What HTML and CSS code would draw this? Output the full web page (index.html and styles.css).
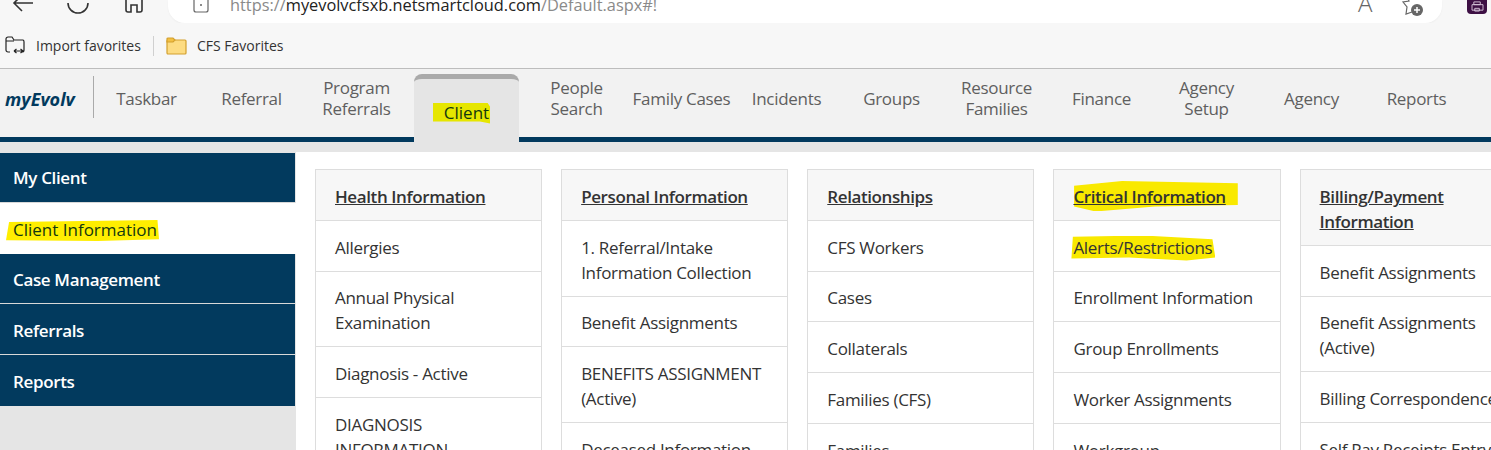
FILE: index.html
```html
<!DOCTYPE html>
<html lang="en">
<head>
<meta charset="utf-8">
<title>myEvolv</title>
<link rel="stylesheet" href="styles.css">
</head>
<body>
<header class="browser">
  <div class="toolbar">
    <svg class="tb-icon back" viewBox="0 0 24 14"><path d="M22 3H3M11-5 3 3l8 8"/></svg>
    <svg class="tb-icon refresh" viewBox="0 0 24 16"><path d="M22 3A10 10 0 1 1 2 3"/></svg>
    <svg class="tb-icon home" viewBox="0 0 20 14"><path d="M2-4V10a2 2 0 0 0 2 2h3V5h6v7h3a2 2 0 0 0 2-2V-4"/></svg>
    <div class="address">
      <svg class="site-icon" viewBox="0 0 16 14"><path d="M1-3V10a2 2 0 0 0 2 2h10a2 2 0 0 0 2-2V-3"/><circle cx="8" cy="5" r="1"/></svg>
      <div class="url"><span class="url-dim">https://</span>myevolvcfsxb.netsmartcloud.com<span class="url-dim">/Default.aspx#!</span></div>
      <div class="addr-right">
        <span class="read-a">A<span class="read-w">&#x2019;&#x2019;</span></span>
        <svg class="fav-add" viewBox="0 0 24 18"><path class="star" d="M6-4 8 1l-6 1 4 5-1 7 6-2"/><path class="star" d="M13-4l2 3 6 .5"/><circle cx="16" cy="10" r="6"/><path class="plus" d="M16 7v6M13 10h6"/></svg>
      </div>
    </div>
    <div class="profile"><svg viewBox="0 0 14 12"><path d="M3 1h7v3H3zM1 4h12v6H1zM4 8h5v3H4z"/></svg></div>
  </div>
  <div class="favbar">
    <div class="fav">
      <svg class="fav-import" viewBox="0 0 21 19"><path d="M5 16H3a2 2 0 0 1-2-2V3a2 2 0 0 1 2-2h4l2 3h9a2 2 0 0 1 1 2v8a2 2 0 0 1-2 2M1 5h8M9 15h9M9 15l2.500-2M9 15l2.500 2M18 15l-2.500-2M18 15l-2.500 2"/></svg>
      <span>Import favorites</span>
    </div>
    <div class="fav-sep"></div>
    <div class="fav">
      <svg class="folder" viewBox="0 0 21 18"><path class="folder-body" d="M1 4a1 1 0 0 1 1-1h17a1 1 0 0 1 1 1v12a1 1 0 0 1-1 1H2a1 1 0 0 1-1-1z"/><path class="folder-tab" d="M1 5V2a1 1 0 0 1 1-1h5l2 2-2 2z"/></svg>
      <span>CFS Favorites</span>
    </div>
  </div>
</header>

<nav class="mainnav">
  <div class="logo">myEvolv</div>
  <a class="nav-item">Taskbar</a>
  <a class="nav-item">Referral</a>
  <a class="nav-item">Program Referrals</a>
  <a class="nav-item active"><span class="hl hl-client">Client</span></a>
  <a class="nav-item">People Search</a>
  <a class="nav-item">Family Cases</a>
  <a class="nav-item">Incidents</a>
  <a class="nav-item">Groups</a>
  <a class="nav-item">Resource Families</a>
  <a class="nav-item">Finance</a>
  <a class="nav-item">Agency Setup</a>
  <a class="nav-item">Agency</a>
  <a class="nav-item">Reports</a>
</nav>

<div class="workspace">
  <aside class="sidebar">
    <a class="side-item">My Client</a>
    <a class="side-item current"><span class="hl hl-side">Client Information</span></a>
    <a class="side-item">Case Management</a>
    <a class="side-item">Referrals</a>
    <a class="side-item">Reports</a>
  </aside>
  <main class="content">
    <section class="panel">
      <h2 class="panel-head"><a>Health Information</a></h2>
      <a class="row">Allergies</a>
      <a class="row">Annual Physical Examination</a>
      <a class="row">Diagnosis - Active</a>
      <a class="row">DIAGNOSIS INFORMATION</a>
    </section>
    <section class="panel">
      <h2 class="panel-head"><a>Personal Information</a></h2>
      <a class="row">1. Referral/Intake Information Collection</a>
      <a class="row">Benefit Assignments</a>
      <a class="row">BENEFITS ASSIGNMENT (Active)</a>
      <a class="row">Deceased Information</a>
    </section>
    <section class="panel">
      <h2 class="panel-head"><a>Relationships</a></h2>
      <a class="row">CFS Workers</a>
      <a class="row">Cases</a>
      <a class="row">Collaterals</a>
      <a class="row">Families (CFS)</a>
      <a class="row">Families</a>
    </section>
    <section class="panel">
      <h2 class="panel-head"><a class="hl hl-crit">Critical Information</a></h2>
      <a class="row"><span class="hl hl-alert">Alerts/Restrictions</span></a>
      <a class="row">Enrollment Information</a>
      <a class="row">Group Enrollments</a>
      <a class="row">Worker Assignments</a>
      <a class="row">Workgroup</a>
    </section>
    <section class="panel">
      <h2 class="panel-head"><a>Billing/Payment Information</a></h2>
      <a class="row">Benefit Assignments</a>
      <a class="row">Benefit Assignments (Active)</a>
      <a class="row">Billing Correspondence</a>
      <a class="row">Self Pay Receipts Entry</a>
    </section>
  </main>
</div>
</body>
</html>
```
FILE: styles.css
```css
* { box-sizing: border-box; }
html, body { margin: 0; height: 450px; overflow: hidden; }
body {
  width: 1491px;
  background: #e5e5e5;
  font-family: "Open Sans", "Noto Sans", sans-serif;
  color: #333;
}
a { color: inherit; }

/* browser chrome */
.browser { height: 69px; background: #f7f7f7; border-bottom: 1px solid #bdbdbd; }
.toolbar { height: 23px; display: flex; align-items: flex-start; overflow: hidden; }
.tb-icon, .site-icon { fill: none; stroke: #333; stroke-width: 1.6; flex: none; }
.back { width: 24px; height: 14px; margin-left: 11px; }
.refresh { width: 24px; height: 16px; margin-left: 31px; }
.home { width: 20px; height: 14px; margin-left: 34px; }
.address {
  width: 1274px; height: 23px; margin-left: 24px;
  background: #fff; border-radius: 0 0 17px 17px;
  display: flex; align-items: flex-start; flex: none;
  box-shadow: 0 1px 2px rgba(0,0,0,.04);
}
.site-icon { width: 16px; height: 14px; margin-left: 25px; stroke: #666; stroke-width: 1.2; }
.site-icon circle { fill: #666; stroke: none; }
.url { margin: -6px 0 0 21px; font-size: 16.350px; line-height: 22px; color: #222; white-space: nowrap; }
.url-dim { color: #8a8a8a; }
.addr-right { margin-left: auto; display: flex; gap: 24px; padding-right: 17px; }
.read-a { margin-top: -15px; font-size: 24px; line-height: 26px; color: #666; font-weight: 300; width: 19px; white-space: nowrap; }
.read-w { font-size: 11px; vertical-align: 10px; }
.fav-add { width: 24px; height: 18px; }
.fav-add .star { fill: none; stroke: #666; stroke-width: 1.2; }
.fav-add circle { fill: #666; }
.fav-add .plus { stroke: #fff; stroke-width: 1.5; }
.profile {
  width: 20px; height: 15px; margin-left: 25px; margin-top: -1px; flex: none;
  background: #3d1044; border-radius: 0 0 4px 4px;
  display: flex; align-items: center; justify-content: center;
}
.profile svg { width: 13px; height: 11px; fill: none; stroke: #d9c8dc; stroke-width: 1; }

.favbar { height: 45px; display: flex; align-items: center; padding-left: 5px; font-size: 14px; color: #333; }
.fav { display: flex; align-items: center; gap: 10px; }
.fav-sep { width: 1px; height: 20px; background: #d0d0d0; margin: 0 12px; }
.fav-import { width: 21px; height: 19px; fill: none; stroke: #222; stroke-width: 1.2; }
.folder { width: 21px; height: 18px; }
.folder-body { fill: #fddc82; stroke: #d3a02e; stroke-width: 1.2; }
.folder-tab { fill: #f3c043; stroke: #d3a02e; stroke-width: 1.2; }

/* main nav */
.mainnav {
  height: 73px; display: flex; align-items: flex-start;
  background: #f2f2f2; border-bottom: 5px solid #023a5e;
}
.logo {
  width: 94px; height: 42px; margin-top: 7px; padding-left: 5px;
  border-right: 1px solid #aaa;
  font-size: 18px; line-height: 46px; font-weight: 700; font-style: italic; color: #023a5e;
}
.nav-item {
  width: 105px; height: 58px; flex: none; padding: 0 3px;
  display: flex; align-items: center; justify-content: center; text-align: center;
  font-size: 17px; line-height: 21px; font-weight: 500; letter-spacing: -.3px; color: #5f5f5f;
}
.nav-item.active {
  height: 78px; margin: 5px 5px 0; padding-bottom: 7px;
  background: #e5e5e5; border-top: 5px solid #aaa; border-radius: 8px 8px 0 0;
  color: #14380f; letter-spacing: 0; position: relative;
}

/* workspace */
.workspace { height: 308px; display: flex; padding-top: 10px; }
.sidebar { width: 296px; flex: none; height: 253px; padding-top: .6px; }
.side-item {
  display: flex; align-items: center; height: 50.600px; width: 295px;
  padding: 2px 0 0 13px; background: #023a5e; color: #fff;
  font-size: 17px; font-weight: 600; letter-spacing: -.35px;
  border-bottom: 1px solid #d8d8d8;
}
.side-item:first-child { padding-top: 0; }
.side-item:last-child { border-bottom: 0; }
.side-item.current { background: #fff; color: #14380f; font-weight: 500; letter-spacing: 0; border-bottom: 0; width: 296px; }
.content {
  flex: 1; min-width: 0; background: #fff; height: 298px; overflow: hidden;
  display: grid; grid-template-columns: repeat(5, 227.150px); column-gap: 19px;
  align-items: start; padding: 17px 0 0 19px;
}
.panel { border: 1px solid #ddd; border-bottom: 0; }
.panel-head {
  margin: 0; padding: 14.400px 19px 10.400px; background: #f7f7f7;
  border-bottom: 1px solid #ddd;
  font-size: 17px; line-height: 25px; font-weight: 600; letter-spacing: -.4px; color: #333;
}
.panel-head a { text-decoration: underline; }
.row {
  display: block; padding: 13.800px 19px 11px; border-bottom: 1px solid #ddd;
  font-size: 17px; line-height: 25px; letter-spacing: -.3px; color: #333;
}

/* highlighter marks */
.hl { position: relative; z-index: 0; }
.hl::before { content: ""; position: absolute; z-index: -1; background: #f9e900; }
.hl-client::before {
  left: -11px; right: -1px; top: 1px; bottom: -1px; background: #e6e600;
  clip-path: polygon(0 0, 95% 0, 100% 20%, 100% 100%, 82% 90%, 0 90%);
}
.hl-side::before {
  left: -7px; right: -2px; top: 2px; bottom: 0; background: #ffee00;
  clip-path: polygon(2% 10%, 99% 0, 100% 92%, 60% 100%, 0 96%);
}
.hl-crit::before {
  left: -1px; right: -12px; top: -6px; bottom: -3px;
  clip-path: polygon(1% 20%, 30% 5%, 100% 12%, 100% 80%, 50% 85%, 14% 100%, 1% 85%);
}
.hl-alert::before {
  left: -2px; right: -3px; top: 0; bottom: -2px;
  clip-path: polygon(1% 5%, 50% 0, 98% 15%, 100% 88%, 80% 100%, 40% 88%, 0 92%);
}
```
